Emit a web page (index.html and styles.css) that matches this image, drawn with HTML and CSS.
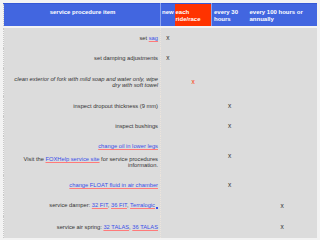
FILE: index.html
```html
<!DOCTYPE html>
<html>
<head>
<meta charset="utf-8">
<link rel="stylesheet" href="styles.css">
</head>
<body>
<div class="wrap">
<table class="svc">
  <colgroup>
    <col class="c-item"><col class="c-new"><col class="c-ride"><col class="c-30"><col class="c-100">
  </colgroup>
  <thead>
    <tr>
      <th class="h-item">service procedure item</th>
      <th class="h-new">new</th>
      <th class="h-ride">each ride/race</th>
      <th class="h-30">every 30 hours</th>
      <th class="h-100">every 100 hours or annually</th>
    </tr>
  </thead>
  <tbody>
    <tr>
      <td class="item">set <a href="#">sag</a></td>
      <td class="mark">x</td><td></td><td></td><td></td>
    </tr>
    <tr>
      <td class="item">set damping adjustments</td>
      <td class="mark">x</td><td></td><td></td><td></td>
    </tr>
    <tr class="tall">
      <td class="item"><em>clean exterior of fork with mild soap and water only, wipe dry with soft towel</em></td>
      <td></td><td class="mark red">x</td><td></td><td></td>
    </tr>
    <tr>
      <td class="item">inspect dropout thickness (9 mm)</td>
      <td></td><td></td><td class="mark">x</td><td></td>
    </tr>
    <tr>
      <td class="item">inspect bushings</td>
      <td></td><td></td><td class="mark">x</td><td></td>
    </tr>
    <tr>
      <td class="item"><a href="#">change oil in lower legs</a>
        <p class="note">Visit the <a href="#">FOXHelp service site</a> for service procedures information.</p></td>
      <td></td><td></td><td class="mark">x</td><td></td>
    </tr>
    <tr>
      <td class="item"><a href="#">change FLOAT fluid in air chamber</a></td>
      <td></td><td></td><td class="mark">x</td><td></td>
    </tr>
    <tr>
      <td class="item">service damper: <a href="#">32 FIT</a>, <a href="#">36 FIT</a>, <a href="#">Terralogic</a><span class="ext"></span></td>
      <td></td><td></td><td></td><td class="mark">x</td>
    </tr>
    <tr class="tall">
      <td class="item">service air spring: <a href="#">32 TALAS</a>, <a href="#">36 TALAS</a></td>
      <td></td><td></td><td></td><td class="mark">x</td>
    </tr>
  </tbody>
</table>
</div>
</body>
</html>
```
FILE: styles.css
```css
html, body {
  margin: 0;
  padding: 0;
  background: #f3f3f3;
}
.wrap {
  padding: 3px 0 0 3px;
}
.svc {
  width: 313px;
  table-layout: fixed;
  border-collapse: collapse;
  font-family: "Liberation Sans", Arial, sans-serif;
  font-size: 6px;
  color: #333;
  border-left: 1px dotted #c8c8c8;
}
.c-item { width: 157px; }
.c-new { width: 14px; }
.c-ride { width: 37px; }
.c-30 { width: 36px; }
.c-100 { width: 69px; }

.svc th {
  background: #4266e0;
  color: #fff;
  font-weight: bold;
  text-align: left;
  vertical-align: top;
  line-height: 7px;
  padding: 5px 1px 3px 2px;
  border-top: 1px solid #3558d6;
  border-bottom: 2px solid #f3f3f3;
}
.svc th.h-item {
  text-align: center;
  border-right: 1px solid #8ea4ee;
}
.svc th.h-ride {
  background: #ff3300;
  padding-left: 1px;
  border-right: 1px solid #8ea4ee;
}
.svc th.h-new { padding-left: 1px; }

.svc td {
  background: #dcdcdc;
  padding: 7px 2px;
  font-size: 5.75px;
  line-height: 6px;
  vertical-align: middle;
}
.svc tr.tall td {
  padding-top: 8px;
  padding-bottom: 8px;
}
.svc td.item {
  text-align: right;
  border-right: 1px dotted #ece4dc;
}
.svc td.mark {
  text-align: center;
  padding-left: 0;
  padding-right: 0;
  font-size: 6.5px;
}
.svc td.red { color: #ff3300; }

.svc a {
  color: #3a4fe8;
  text-decoration: underline;
  text-decoration-color: #ff7a7a;
}
.note {
  margin: 7px 0 0;
}
.ext {
  display: inline-block;
  width: 2px;
  height: 2px;
  background: #3a4fe8;
  vertical-align: -2px;
  margin-left: 1px;
}
```
